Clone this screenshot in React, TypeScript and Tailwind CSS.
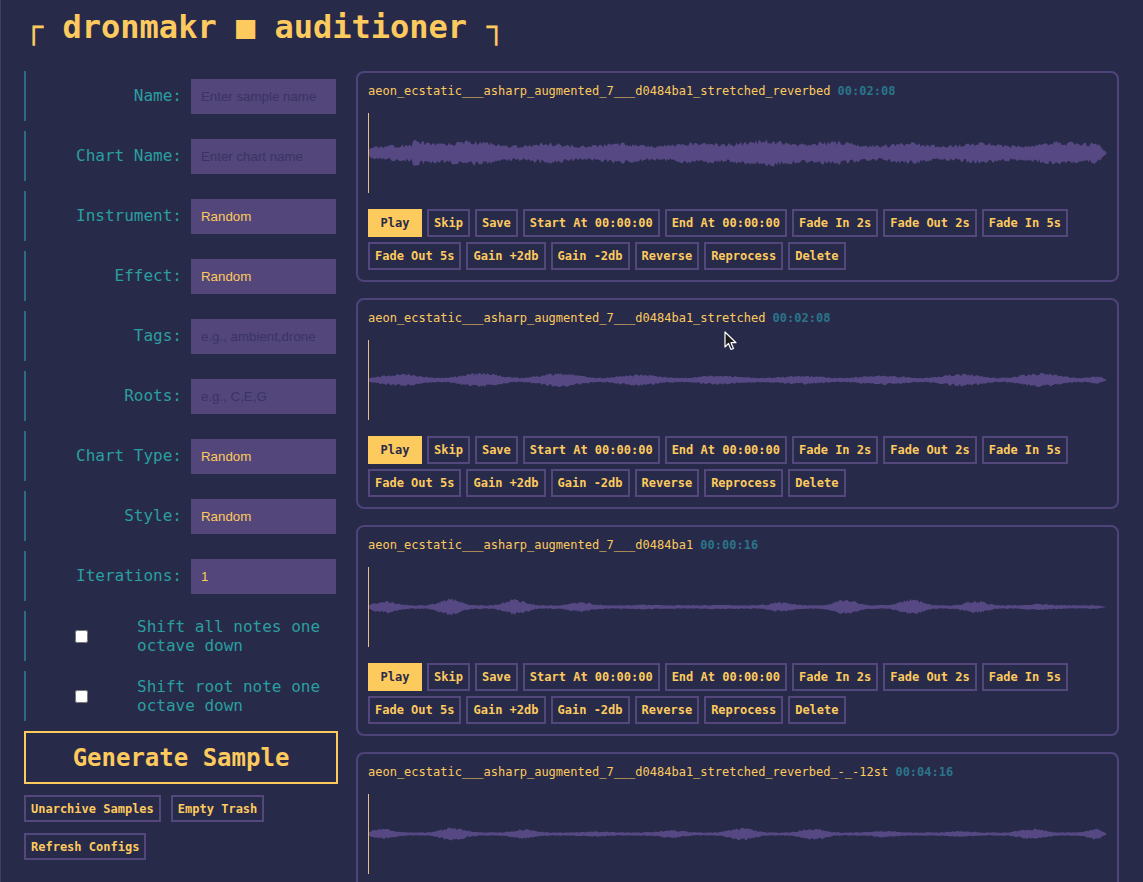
import React from 'react';

const MONO = "font-['DejaVu_Sans_Mono',Menlo,monospace]";

type Field = { label: string; placeholder?: string; value?: string };

const fields: Field[] = [
    { label: 'Name:', placeholder: 'Enter sample name' },
    { label: 'Chart Name:', placeholder: 'Enter chart name' },
    { label: 'Instrument:', value: 'Random' },
    { label: 'Effect:', value: 'Random' },
    { label: 'Tags:', placeholder: 'e.g., ambient,drone' },
    { label: 'Roots:', placeholder: 'e.g., C,E,G' },
    { label: 'Chart Type:', value: 'Random' },
    { label: 'Style:', value: 'Random' },
    { label: 'Iterations:', value: '1' },
];

const checks = ['Shift all notes one octave down', 'Shift root note one octave down'];

type Sample = { name: string; duration: string; seed: number; env: (x: number) => number };

const samples: Sample[] = [
    {
        name: 'aeon_ecstatic___asharp_augmented_7___d0484ba1_stretched_reverbed',
        duration: '00:02:08',
        seed: 11,
        env: (x) => {
            let a = 8 + 3 * Math.sin(x / 23) ** 2 + 3 * Math.max(0, Math.sin(x / 55 + 0.5));
            if (x < 45) a *= 0.65;
            return a;
        },
    },
    {
        name: 'aeon_ecstatic___asharp_augmented_7___d0484ba1_stretched',
        duration: '00:02:08',
        seed: 29,
        env: (x) => 2.5 + 5 * Math.abs(Math.sin(x / 25.5 + 0.3)) ** 2 * (0.7 + 0.3 * Math.sin(x / 90)),
    },
    {
        name: 'aeon_ecstatic___asharp_augmented_7___d0484ba1',
        duration: '00:00:16',
        seed: 47,
        env: (x) => 2 + 7 * Math.abs(Math.sin(x / 21 + 0.8)) ** 4 * (0.5 + 0.5 * Math.sin(x / 67)),
    },
    {
        name: 'aeon_ecstatic___asharp_augmented_7___d0484ba1_stretched_reverbed_-_-12st',
        duration: '00:04:16',
        seed: 83,
        env: (x) => 1.8 + 5 * Math.abs(Math.sin(x / 23 + 1)) ** 4 * (0.6 + 0.4 * Math.sin(x / 51)),
    },
];

const actions = [
    'Skip',
    'Save',
    'Start At 00:00:00',
    'End At 00:00:00',
    'Fade In 2s',
    'Fade Out 2s',
    'Fade In 5s',
    'Fade Out 5s',
    'Gain +2db',
    'Gain -2db',
    'Reverse',
    'Reprocess',
    'Delete',
];

function rng(seed: number) {
    let s = seed * 9301 + 49297;
    return () => {
        s = (s * 16807) % 2147483647;
        return s / 2147483647;
    };
}

// mirrored noisy band, tapered at both ends
function wavePath(seed: number, env: (x: number) => number, width = 740, height = 80) {
    const r = rng(seed);
    const mid = height / 2;
    const top: string[] = [];
    const bot: string[] = [];
    for (let x = 0; x <= width; x += 1.5) {
        const taper = Math.min(1, (width - x) / 10, 0.4 + x / 6);
        const a = env(x) * Math.max(0, taper);
        top.push(`${x.toFixed(1)},${(mid - a * (0.6 + 0.4 * r())).toFixed(1)}`);
        bot.push(`${x.toFixed(1)},${(mid + a * (0.6 + 0.4 * r())).toFixed(1)}`);
    }
    return `M${top.join('L')}L${bot.reverse().join('L')}Z`;
}

const Waveform = ({ sample }: { sample: Sample }) => (
    <div className="relative mt-[14px] h-[80px]">
        <svg viewBox="0 0 740 80" preserveAspectRatio="none" className="h-full w-full">
            <path d={wavePath(sample.seed, sample.env)} fill="#554883" />
        </svg>
        <div className="absolute left-0 top-0 h-full w-px bg-[#e7c27b]" />
    </div>
);

const SampleCard = ({ sample }: { sample: Sample }) => (
    <div className="rounded-lg border-2 border-[#4f4479] px-[10px] pt-[10px] pb-[10px]">
        <div className={`${MONO} text-[12px] leading-[16px] text-[#fdca5e]`}>
            {sample.name} <span className="font-bold text-[#2a7589]">{sample.duration}</span>
        </div>
        <Waveform sample={sample} />
        <div className={`${MONO} mt-[16px] flex flex-wrap gap-x-[5px] gap-y-[5px] text-[12px] font-bold leading-[14px]`}>
            <button className="h-[28px] w-[54px] border-2 border-[#fdca5e] bg-[#fdca5e] text-[#2a2a48]">Play</button>
            {actions.map((a) => (
                <button key={a} className="h-[28px] border-2 border-[#54477c] px-[5px] text-[#fdca5e]">
                    {a}
                </button>
            ))}
        </div>
    </div>
);

const Cursor = () => (
    <svg className="pointer-events-none absolute left-[724px] top-[331px]" width="13" height="20" viewBox="0 0 13 20">
        <path d="M1 1 L1 16 L4.5 12.5 L7 18.5 L9.5 17.5 L7 11.7 L12 11.7 Z" fill="#1b1b1b" stroke="#ffffff" strokeWidth="1.2" strokeLinejoin="round" />
    </svg>
);

export default function App() {
    return (
        <div className="relative h-[882px] overflow-hidden bg-[#282a4a] px-[24px] shadow-[inset_1px_0_0_#3d3f66]">
            <h1 className={`${MONO} pt-[9px] text-[32px] font-bold leading-[37px] text-[#fdca5e]`}>
                ┌ dronmakr ■ auditioner ┐
            </h1>

            <div className="mt-[25px] flex items-start gap-[18px]">
                <div className="flex w-[314px] shrink-0 flex-col">
                    <div className="flex flex-col gap-[10px]">
                        {fields.map((f) => (
                            <div key={f.label} className="flex h-[50px] items-center border-l-2 border-[#2a6e86] pr-[2px]">
                                <label className={`${MONO} mr-[9px] flex-1 text-right text-[16px] text-[#2a9f9e]`}>
                                    {f.label}
                                </label>
                                <input
                                    readOnly
                                    placeholder={f.placeholder}
                                    defaultValue={f.value}
                                    className="h-[35px] w-[145px] bg-[#52467a] px-[10px] font-['Liberation_Sans',Arial,sans-serif] text-[13.3px] text-[#fdca5e] outline-none placeholder:text-[#3a3463]"
                                />
                            </div>
                        ))}
                        {checks.map((c) => (
                            <div key={c} className="flex h-[50px] items-center border-l-2 border-[#2a6e86] pr-[2px]">
                                <div className="flex w-[111px] justify-center">
                                    <input type="checkbox" className="m-0 h-[13px] w-[13px]" />
                                </div>
                                <span className={`${MONO} flex-1 text-[16px] leading-[19px] text-[#2a9f9e]`}>{c}</span>
                            </div>
                        ))}
                    </div>

                    <button className={`${MONO} mt-[10px] h-[53px] border-2 border-[#fdca5e] text-[24px] font-bold text-[#fdca5e]`}>
                        Generate Sample
                    </button>

                    <div className={`${MONO} mt-[11px] flex flex-wrap gap-x-[10px] gap-y-[11px] text-[12px] font-bold leading-[14px]`}>
                        {['Unarchive Samples', 'Empty Trash', 'Refresh Configs'].map((b) => (
                            <button key={b} className="h-[27px] border-2 border-[#54477c] px-[5px] text-[#fdca5e]">
                                {b}
                            </button>
                        ))}
                    </div>
                </div>

                <div className="flex flex-1 flex-col gap-[16px]">
                    {samples.map((s) => (
                        <SampleCard key={s.name} sample={s} />
                    ))}
                </div>
            </div>

            <Cursor />
        </div>
    );
}
